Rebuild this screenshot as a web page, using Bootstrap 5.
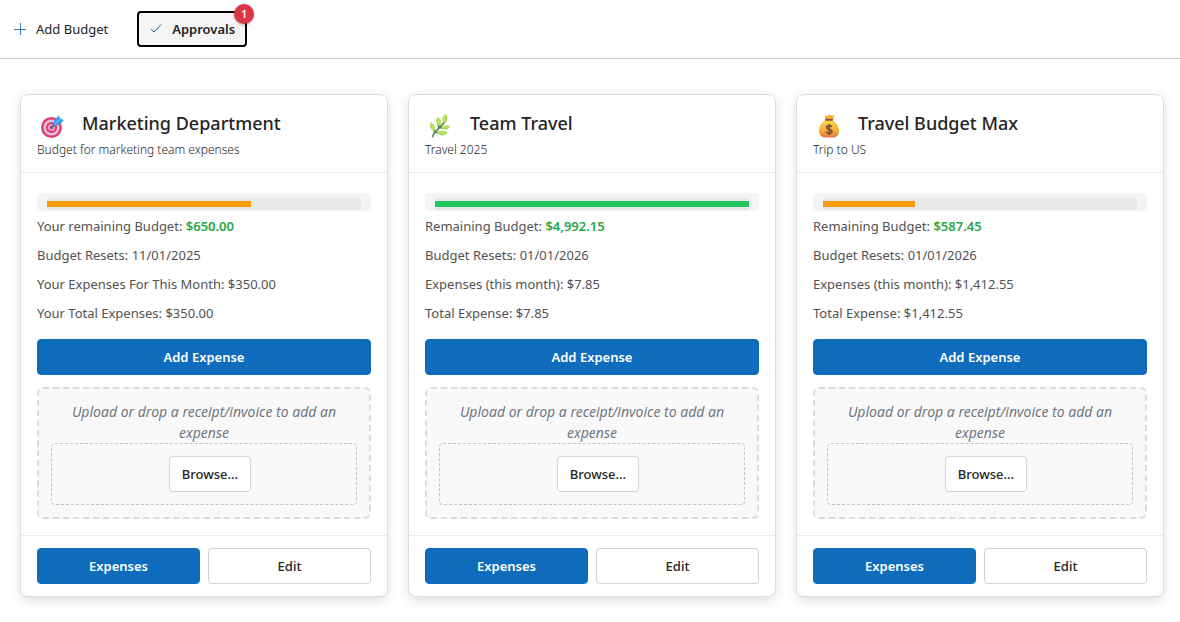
<!DOCTYPE html>
<html lang="en">
<head>
<meta charset="utf-8">
<meta name="viewport" content="width=device-width, initial-scale=1">
<title>Budgets</title>
<link href="https://cdn.jsdelivr.net/npm/bootstrap@5.3.0/dist/css/bootstrap.min.css" rel="stylesheet">
<style>
  body { font-family: "Noto Sans", "Open Sans", sans-serif; font-size: 13px; line-height: 21px; color: #242424; }
  .toolbar { height: 59px; border-bottom: 1px solid #c8c8c8; gap: 16px; }
  .btn { --bs-btn-font-size: 13px; --bs-btn-line-height: 20px; --bs-btn-border-radius: 4px; --bs-btn-padding-y: 7px; --bs-btn-padding-x: 12px; --bs-btn-font-weight: 600; }
  .btn-tool { --bs-btn-color: #242424; --bs-btn-font-weight: 400; gap: 9px; }
  .btn-tool.current { --bs-btn-font-weight: 600; background: #f5f5f5; border: 2px solid #000; --bs-btn-padding-y: 6px; --bs-btn-padding-x: 10px; }
  .btn-blue { --bs-btn-color: #fff; --bs-btn-bg: #0f6cbd; --bs-btn-border-color: #0f6cbd; --bs-btn-hover-color: #fff; --bs-btn-hover-bg: #115ea3; }
  .btn-plain { --bs-btn-color: #242424; --bs-btn-bg: #fff; --bs-btn-border-color: #d1d1d1; --bs-btn-hover-bg: #f5f5f5; --bs-btn-font-weight: 500; }
  .count { top: -9px; right: -9px; width: 20px; height: 20px; background: #dc3545; font-size: 11px; line-height: 20px; box-shadow: 0 1px 3px rgba(0,0,0,.3); }
  .board { padding: 35px 16px 24px 20px; }
  .budget { --bs-card-border-color: #dcdcdc; --bs-card-border-radius: 8px; --bs-card-inner-border-radius: 7px; --bs-card-cap-bg: #fff; box-shadow: 0 4px 12px rgba(0,0,0,.12); }
  .budget .card-header { padding: 14px 16px 11px; border-color: #ebebeb; }
  .budget .card-footer { padding: 12px 16px; border-color: #ebebeb; }
  .budget h2 { font-size: 18px; line-height: 29px; font-weight: 500; }
  .emoji { width: 24px; height: 24px; margin: 5px 18px 1px 3px; }
  .note { font-size: 12px; font-weight: 300; line-height: 22px; }
  .meter-box { background: #f3f4f6; border-radius: 4px; padding: 5px 10px 1px; margin: 4px 0 5px; }
  .meter-box .progress { --bs-progress-height: 12px; --bs-progress-bg: #e8e8e8; --bs-progress-border-radius: 0; padding: 3px 0; }
  .fill-amber { background: #f59e0b; }
  .fill-green { background: #22c55e; }
  .facts { color: #525252; margin-bottom: 15px; }
  .money { color: #28a745; font-weight: 600; }
  .drop { border: 2px dashed #dcdcdc; border-radius: 6px; background: #f9f9f9; padding: 12px; margin-top: 12px; }
  .drop p { color: #707780; font-size: 14px; }
  .drop-inner { border: 1px dashed #c4c4c4; border-radius: 4px; padding: 12px 0 12px 12px; }
  .browse { min-width: 82px; }
</style>
</head>
<body class="bg-white">
<svg class="position-absolute" width="0" height="0" aria-hidden="true">
  <defs><linearGradient id="bag" x2="0" y2="1"><stop stop-color="#ffd34a"/><stop offset=".65" stop-color="#f4a936"/><stop offset="1" stop-color="#e07646"/></linearGradient></defs>
  <symbol id="target" viewBox="0 0 24 24">
    <circle cx="11.5" cy="13.5" r="10.5" fill="#e23f72"/><circle cx="11.5" cy="13.5" r="8" fill="#d9c3e0"/>
    <circle cx="11.5" cy="13.5" r="5.6" fill="#e23f72"/><circle cx="11.5" cy="13.5" r="3.3" fill="#d9b9dc"/><circle cx="11.5" cy="13.5" r="1.7" fill="#cf3567"/>
    <path d="M11.5 13.5 17 8" stroke="#28659f" stroke-width="1.6"/>
    <path d="M14 11 14.2 6.2 19 1.2l1 3.6L24 6l-5 5z" fill="#369eea"/><path d="M14 11l7.5-7.3" fill="none" stroke="#7dcdfd" stroke-width="1"/>
  </symbol>
  <symbol id="herb" viewBox="0 0 24 24">
    <path d="M4.500 23.300C5 17 12 15 16.900 7.500M6.500 18 5 13M11 14.500 10 9M7 18c4 1.500 7 .5 10 .3M12 13.500c3 1 6 .5 8 .2" fill="none" stroke="#56804a" stroke-width="1.700"/>
    <g fill="#a5d84d"><path d="M17.600 0c2.600 3 2.200 7-1.300 9.300C13.300 6.200 14.800 2.500 17.600 0z"/><path d="M9.300 3.300c3.800 1.500 4.700 5.500 2.300 8.800C7.700 10.600 7.800 6.400 9.300 3.300z"/><path d="M2.300 8.500C6 9.600 7.900 12.800 6.700 17 2.700 15.800 1.400 12.300 2.300 8.500z"/><path d="M22 12.400c-2 3.600-6 4.200-9 1.700 2.100-3.200 5.800-3.500 9-1.700z"/><path d="M19.500 18.600c-3 3.800-7.400 3.800-10.500.4 3-3.200 7.200-2.800 10.500-.4z"/></g>
    <path d="M17.200 2 16.400 8M9.800 5.400l1.600 5.300M3.500 10.500l2.700 5M20 13h-5M17 18.700l-6 .2" stroke="#c7ef72" stroke-width="1"/>
  </symbol>
  <symbol id="moneybag" viewBox="0 0 24 24">
    <path d="M9.800 5.300 8.500 1.400l3 .8L13.800.2l1.800 1.600 3-.6-2 4.200z" fill="#f7ac2f"/>
    <path d="M9.500 6C5 9 2.800 13 3 17c.2 4 2.300 6.500 6 6.500h8c3.700 0 5.900-2.500 6-6.500.1-4-2.500-8-6.500-11z" fill="url(#bag)"/>
    <path d="M10 5.800h6.200" stroke="#8b5843" stroke-width="2" stroke-linecap="round"/>
    <path d="M15.700 12.800c-.6-1.300-5-1.700-5 .6 0 2.400 5.200 1.400 5.200 3.900 0 2.500-4.800 2.300-5.600.5M13.200 10v11" fill="none" stroke="#80513c" stroke-width="1.800"/>
  </symbol>
</svg>

<nav class="toolbar d-flex align-items-center" aria-label="Budget actions">
  <button type="button" class="btn btn-tool d-flex align-items-center">
    <svg width="14" height="14" viewBox="0 0 14 14" fill="none" stroke="#3579b5" aria-hidden="true"><path d="M7.500 1v12M1 7.500h12"/></svg>Add Budget
  </button>
  <button type="button" class="btn btn-tool current d-flex align-items-center position-relative">
    <svg width="14" height="14" viewBox="0 0 14 14" fill="none" stroke="#27608f" aria-hidden="true"><path d="M2 7 5 10 12 2.500"/></svg>Approvals
    <span class="count position-absolute rounded-circle text-white text-center">1</span>
  </button>
</nav>

<main class="board">
  <div class="row row-cols-3" style="--bs-gutter-x:20px">
    <div class="col">
      <article class="card budget">
        <header class="card-header">
          <div class="d-flex"><svg class="emoji flex-shrink-0" aria-hidden="true"><use href="#target"/></svg><h2 class="mb-0">Marketing Department</h2></div>
          <div class="note">Budget for marketing team expenses</div>
        </header>
        <div class="card-body">
          <div class="meter-box"><div class="progress" role="progressbar" aria-label="Remaining budget" aria-valuenow="65" aria-valuemin="0" aria-valuemax="100"><div class="progress-bar fill-amber" style="width:65%"></div></div></div>
          <div class="facts d-flex flex-column gap-2">
            <div>Your remaining Budget: <span class="money">$650.00</span></div>
            <div>Budget Resets: 11/01/2025</div>
            <div>Your Expenses For This Month: $350.00</div>
            <div>Your Total Expenses: $350.00</div>
          </div>
          <button type="button" class="btn btn-blue w-100">Add Expense</button>
          <div class="drop text-center">
            <p class="fst-italic mb-0">Upload or drop a receipt/invoice to add an expense</p>
            <div class="drop-inner"><button type="button" class="btn btn-plain browse">Browse...</button></div>
          </div>
        </div>
        <footer class="card-footer d-flex gap-2"><button type="button" class="btn btn-blue w-50">Expenses</button><button type="button" class="btn btn-plain w-50">Edit</button></footer>
      </article>
    </div>
    <div class="col">
      <article class="card budget">
        <header class="card-header">
          <div class="d-flex"><svg class="emoji flex-shrink-0" aria-hidden="true"><use href="#herb"/></svg><h2 class="mb-0">Team Travel</h2></div>
          <div class="note">Travel 2025</div>
        </header>
        <div class="card-body">
          <div class="meter-box"><div class="progress" role="progressbar" aria-label="Remaining budget" aria-valuenow="100" aria-valuemin="0" aria-valuemax="100"><div class="progress-bar fill-green" style="width:100%"></div></div></div>
          <div class="facts d-flex flex-column gap-2">
            <div>Remaining Budget: <span class="money">$4,992.15</span></div>
            <div>Budget Resets: 01/01/2026</div>
            <div>Expenses (this month): $7.85</div>
            <div>Total Expense: $7.85</div>
          </div>
          <button type="button" class="btn btn-blue w-100">Add Expense</button>
          <div class="drop text-center">
            <p class="fst-italic mb-0">Upload or drop a receipt/invoice to add an expense</p>
            <div class="drop-inner"><button type="button" class="btn btn-plain browse">Browse...</button></div>
          </div>
        </div>
        <footer class="card-footer d-flex gap-2"><button type="button" class="btn btn-blue w-50">Expenses</button><button type="button" class="btn btn-plain w-50">Edit</button></footer>
      </article>
    </div>
    <div class="col">
      <article class="card budget">
        <header class="card-header">
          <div class="d-flex"><svg class="emoji flex-shrink-0" aria-hidden="true"><use href="#moneybag"/></svg><h2 class="mb-0">Travel Budget Max</h2></div>
          <div class="note">Trip to US</div>
        </header>
        <div class="card-body">
          <div class="meter-box"><div class="progress" role="progressbar" aria-label="Remaining budget" aria-valuenow="29" aria-valuemin="0" aria-valuemax="100"><div class="progress-bar fill-amber" style="width:29.4%"></div></div></div>
          <div class="facts d-flex flex-column gap-2">
            <div>Remaining Budget: <span class="money">$587.45</span></div>
            <div>Budget Resets: 01/01/2026</div>
            <div>Expenses (this month): $1,412.55</div>
            <div>Total Expense: $1,412.55</div>
          </div>
          <button type="button" class="btn btn-blue w-100">Add Expense</button>
          <div class="drop text-center">
            <p class="fst-italic mb-0">Upload or drop a receipt/invoice to add an expense</p>
            <div class="drop-inner"><button type="button" class="btn btn-plain browse">Browse...</button></div>
          </div>
        </div>
        <footer class="card-footer d-flex gap-2"><button type="button" class="btn btn-blue w-50">Expenses</button><button type="button" class="btn btn-plain w-50">Edit</button></footer>
      </article>
    </div>
  </div>
</main>
<script src="https://cdn.jsdelivr.net/npm/bootstrap@5.3.0/dist/js/bootstrap.bundle.min.js"></script>
</body>
</html>
